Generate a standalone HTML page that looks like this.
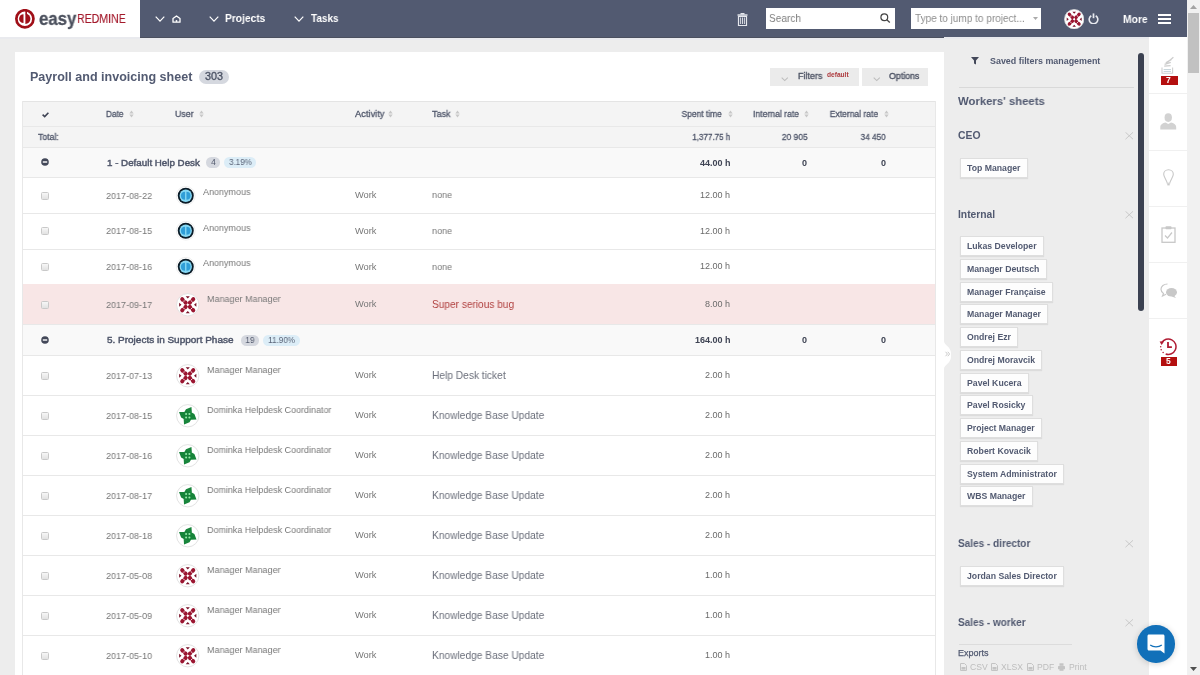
<!DOCTYPE html><html><head><meta charset="utf-8"><style>*{box-sizing:border-box;margin:0;padding:0}
html,body{width:1200px;height:675px;overflow:hidden;background:#ededed;font-family:"Liberation Sans",sans-serif;position:relative}
.a{position:absolute;white-space:nowrap;will-change:transform}
.th{font-size:7.85px;font-weight:bold;color:#525a71;line-height:10px}
</style></head><body><div class="a" style="left:0px;top:0px;width:140px;height:37px;background:#fff;"></div>
<div class="a" style="left:140px;top:0px;width:1047px;height:38px;background:#525a71;"></div>
<div class="a" style="left:140px;top:37px;width:1047px;height:1px;background:#4a4f5f;"></div>
<div class="a" style="left:0px;top:37px;width:140px;height:2px;background:#e9eaee;"></div>
<div class="a" style="left:140px;top:38px;width:1047px;height:2px;background:#e9eaee;"></div>
<svg class="a" style="left:15.3px;top:8.9px" width="20" height="20" viewBox="0 0 20 20"><circle cx="9.9" cy="9.8" r="8.55" fill="none" stroke="#a00f18" stroke-width="2.7"/>
<path d="M8.5 5.3 A4.4 4.4 0 0 0 8.5 14.1 Z" fill="#a00f18"/>
<path d="M10.35 4.7 A5.1 5.1 0 0 1 10.35 14.9 Z" fill="#a00f18"/><rect x="10.35" y="1.8" width="1.7" height="3.5" fill="#a00f18"/></svg>
<div class="a" style="left:39.425px;top:8.2px;font-size:17.5px;line-height:22px;color:#4b505d;font-weight:bold;transform:scaleX(0.9582);transform-origin:0 50%;-webkit-text-stroke:0.3px #4b505d">easy</div>
<div class="a" style="left:77.14px;top:11.2px;font-size:13.2px;line-height:16px;color:#a3192b;font-weight:normal;transform:scaleX(0.8031);transform-origin:0 50%;-webkit-text-stroke:0.15px #a3192b">REDMINE</div>
<svg class="a" style="left:154.5px;top:15.9px" width="10" height="6" viewBox="0 0 10 6"><path d="M0.7 0.7 L5.0 5.1 L9.3 0.7" fill="none" stroke="#fff" stroke-width="1.2"/></svg>
<svg class="a" style="left:171.5px;top:15px" width="9" height="8" viewBox="0 0 9 8"><path d="M1 7.2 V3.6 L4.5 0.9 L8 3.6 V7.2 Z" fill="none" stroke="#fff" stroke-width="1.3" stroke-linejoin="round"/><circle cx="4.5" cy="6" r="0.9" fill="#fff"/></svg>
<svg class="a" style="left:209px;top:15.9px" width="10" height="6" viewBox="0 0 10 6"><path d="M0.7 0.7 L5.0 5.1 L9.3 0.7" fill="none" stroke="#fff" stroke-width="1.2"/></svg>
<div class="a" style="left:225.25px;top:11.3px;font-size:11px;line-height:14px;color:#fff;font-weight:bold;transform:scaleX(0.9289);transform-origin:0 50%;">Projects</div>
<svg class="a" style="left:293.7px;top:15.9px" width="10" height="6" viewBox="0 0 10 6"><path d="M0.7 0.7 L5.0 5.1 L9.3 0.7" fill="none" stroke="#fff" stroke-width="1.2"/></svg>
<div class="a" style="left:310.65px;top:11.3px;font-size:11px;line-height:14px;color:#fff;font-weight:bold;transform:scaleX(0.9061);transform-origin:0 50%;">Tasks</div>
<svg class="a" style="left:737px;top:12.5px" width="11" height="13" viewBox="0 0 11 13"><rect x="0.5" y="1.3" width="10" height="1.4" fill="#e6e8ee"/><rect x="3.5" y="0" width="4" height="1.5" fill="#e6e8ee"/><path d="M1.5 3.3 H9.5 V12.5 H1.5 Z" fill="none" stroke="#e6e8ee" stroke-width="1.2"/><path d="M3.6 4.5 V11 M5.5 4.5 V11 M7.4 4.5 V11" stroke="#e6e8ee" stroke-width="0.9"/></svg>
<div class="a" style="left:766px;top:8px;width:129px;height:21px;background:#fff;"></div>
<div class="a" style="left:769.02px;top:11.100000000000001px;font-size:11.6px;line-height:14px;color:#808080;font-weight:normal;transform:scaleX(0.8705);transform-origin:0 50%;">Search</div>
<svg class="a" style="left:880px;top:13.3px" width="11" height="10" viewBox="0 0 11 10"><circle cx="4.3" cy="4.2" r="3.4" fill="none" stroke="#444" stroke-width="1.2"/><path d="M6.8 6.8 L9.8 9.5" stroke="#444" stroke-width="1.3"/></svg>
<div class="a" style="left:911px;top:8px;width:130px;height:21px;background:#fff;"></div>
<div class="a" style="left:915.02px;top:11.100000000000001px;font-size:11.6px;line-height:14px;color:#8e8e8e;font-weight:normal;transform:scaleX(0.8645);transform-origin:0 50%;">Type to jump to project...</div>
<svg class="a" style="left:1033px;top:17px" width="5" height="3" viewBox="0 0 5 3"><path d="M0 0 H5 L2.5 3 Z" fill="#aaa"/></svg>
<svg class="a" style="left:1063.6px;top:8.7px" width="20.4" height="20.4" viewBox="0 0 24 24">
<circle cx="12" cy="12" r="11.4" fill="#fff" stroke="#dedede" stroke-width="0.9"/><ellipse cx="6.6" cy="6.6" rx="2.5" ry="2.05" transform="rotate(45 6.6 6.6)" fill="#9b1631"/><ellipse cx="9.7" cy="9.7" rx="2.5" ry="2.05" transform="rotate(45 9.7 9.7)" fill="#9b1631"/><ellipse cx="17.4" cy="6.6" rx="2.5" ry="2.05" transform="rotate(-45 17.4 6.6)" fill="#9b1631"/><ellipse cx="14.3" cy="9.7" rx="2.5" ry="2.05" transform="rotate(-45 14.3 9.7)" fill="#9b1631"/><ellipse cx="6.6" cy="17.4" rx="2.5" ry="2.05" transform="rotate(-45 6.6 17.4)" fill="#9b1631"/><ellipse cx="9.7" cy="14.3" rx="2.5" ry="2.05" transform="rotate(-45 9.7 14.3)" fill="#9b1631"/><ellipse cx="17.4" cy="17.4" rx="2.5" ry="2.05" transform="rotate(45 17.4 17.4)" fill="#9b1631"/><ellipse cx="14.3" cy="14.3" rx="2.5" ry="2.05" transform="rotate(45 14.3 14.3)" fill="#9b1631"/>
<path d="M9.9 3.2 H14.1 L12 5.6 Z M9.9 20.8 H14.1 L12 18.4 Z M3.2 9.9 V14.1 L5.6 12 Z M20.8 9.9 V14.1 L18.4 12 Z" fill="#7a1229"/>
<circle cx="12" cy="12" r="1.1" fill="#fff"/><circle cx="8.15" cy="8.15" r="0.6" fill="#fff"/><circle cx="15.85" cy="8.15" r="0.6" fill="#fff"/><circle cx="8.15" cy="15.85" r="0.6" fill="#fff"/><circle cx="15.85" cy="15.85" r="0.6" fill="#fff"/>
</svg>
<svg class="a" style="left:1088.2px;top:13.4px" width="11" height="11" viewBox="0 0 11 11"><path d="M3.3 2.7 A4.3 4.3 0 1 0 7.7 2.7" fill="none" stroke="#e8eaf0" stroke-width="1.6"/><path d="M5.5 0.4 V5.2" stroke="#e8eaf0" stroke-width="1.7"/></svg>
<div class="a" style="left:1123.3500000000001px;top:11.8px;font-size:11px;line-height:14px;color:#fff;font-weight:bold;transform:scaleX(0.9330);transform-origin:0 50%;">More</div>
<svg class="a" style="left:1158.3px;top:13.6px" width="13" height="10" viewBox="0 0 13 10"><rect x="0" y="0" width="13" height="2" fill="#fff"/><rect x="0" y="4" width="13" height="2" fill="#fff"/><rect x="0" y="8" width="13" height="2" fill="#fff"/></svg>
<div class="a" style="left:1187px;top:0px;width:13px;height:675px;background:#f1f1f1;"></div>
<div class="a" style="left:1188px;top:13px;width:11px;height:60px;background:#c1c1c1;"></div>
<svg class="a" style="left:1190px;top:5px" width="7" height="4" viewBox="0 0 7 4"><path d="M0 4 H7 L3.5 0 Z" fill="#a3a3a3"/></svg>
<svg class="a" style="left:1190px;top:667px" width="7" height="4" viewBox="0 0 7 4"><path d="M0 0 H7 L3.5 4 Z" fill="#505050"/></svg>
<div class="a" style="left:15px;top:52px;width:929px;height:640px;background:#fff;"></div>
<div class="a" style="left:29.975px;top:68.9px;font-size:12.5px;line-height:16px;color:#525a71;font-weight:bold;transform:scaleX(1.0029);transform-origin:0 50%;">Payroll and invoicing sheet</div>
<div class="a" style="left:199.3px;top:70px;width:30.3px;height:14.4px;background:#d5d8df;border-radius:7.2px"></div>
<div class="a" style="left:205.44128124999997px;top:69.4px;font-size:10.8px;line-height:14px;color:#4a5163;font-weight:normal;-webkit-text-stroke:0.3px #4a5163">303</div>
<div class="a" style="left:770px;top:68px;width:89px;height:17.5px;background:#ebebeb;"></div>
<div class="a" style="left:862px;top:68px;width:65.5px;height:17.5px;background:#ebebeb;"></div>
<svg class="a" style="left:781px;top:77px" width="7.5" height="4.5" viewBox="0 0 7.5 4.5"><path d="M0.7 0.7 L3.75 3.6 L6.8 0.7" fill="none" stroke="#bdbdbd" stroke-width="1.1"/></svg>
<svg class="a" style="left:872.5px;top:77px" width="7.5" height="4.5" viewBox="0 0 7.5 4.5"><path d="M0.7 0.7 L3.75 3.6 L6.8 0.7" fill="none" stroke="#bdbdbd" stroke-width="1.1"/></svg>
<div class="a" style="left:797.795px;top:70.6px;font-size:9.1px;line-height:11px;color:#4d5364;font-weight:normal;transform:scaleX(0.9827);transform-origin:0 50%;-webkit-text-stroke:0.35px #4d5364">Filters</div>
<div class="a" style="left:826.87px;top:70.7px;font-size:6.6px;line-height:8px;color:#ad3a3e;font-weight:bold;transform:scaleX(0.9843);transform-origin:0 50%;">default</div>
<div class="a" style="left:889.245px;top:70.6px;font-size:9.1px;line-height:11px;color:#4d5364;font-weight:normal;transform:scaleX(0.9691);transform-origin:0 50%;-webkit-text-stroke:0.35px #4d5364">Options</div>
<div class="a" style="left:22px;top:101px;width:914px;height:25px;background:#f4f4f4;"></div>
<div class="a" style="left:22px;top:126px;width:914px;height:21px;background:#f4f4f4;"></div>
<div class="a" style="left:22px;top:147px;width:914px;height:30px;background:#f9f9f9;"></div>
<div class="a" style="left:22px;top:101px;width:914px;height:1px;background:#e4e4e4;"></div>
<div class="a" style="left:22px;top:126px;width:914px;height:1px;background:#e8e8e8;"></div>
<div class="a" style="left:22px;top:147px;width:914px;height:1px;background:#e8e8e8;"></div>
<div class="a" style="left:22px;top:177px;width:914px;height:1px;background:#e8e8e8;"></div>
<svg class="a" style="left:41.5px;top:111.5px" width="7" height="5.5" viewBox="0 0 7 5.5"><path d="M0.6 2.6 L2.7 4.6 L6.4 0.7" fill="none" stroke="#3f4454" stroke-width="1.6"/></svg>
<div class="a" style="left:106.33px;top:108.0px;font-size:9.4px;line-height:12px;color:#4f566a;font-weight:normal;transform:scaleX(0.8828);transform-origin:0 50%;-webkit-text-stroke:0.3px #4f566a">Date</div>
<svg class="a" style="left:129.3px;top:110px" width="5" height="8" viewBox="0 0 5 8"><path d="M0.3 3.4 L2.5 0.4 L4.7 3.4 Z M0.3 4.6 L2.5 7.6 L4.7 4.6 Z" fill="#c8c8c8"/></svg>
<div class="a" style="left:174.83px;top:108.0px;font-size:9.4px;line-height:12px;color:#4f566a;font-weight:normal;transform:scaleX(0.9336);transform-origin:0 50%;-webkit-text-stroke:0.3px #4f566a">User</div>
<svg class="a" style="left:198.7px;top:110px" width="5" height="8" viewBox="0 0 5 8"><path d="M0.3 3.4 L2.5 0.4 L4.7 3.4 Z M0.3 4.6 L2.5 7.6 L4.7 4.6 Z" fill="#c8c8c8"/></svg>
<div class="a" style="left:354.53px;top:108.0px;font-size:9.4px;line-height:12px;color:#4f566a;font-weight:normal;transform:scaleX(0.9885);transform-origin:0 50%;-webkit-text-stroke:0.3px #4f566a">Activity</div>
<svg class="a" style="left:388px;top:110px" width="5" height="8" viewBox="0 0 5 8"><path d="M0.3 3.4 L2.5 0.4 L4.7 3.4 Z M0.3 4.6 L2.5 7.6 L4.7 4.6 Z" fill="#c8c8c8"/></svg>
<div class="a" style="left:431.53px;top:108.0px;font-size:9.4px;line-height:12px;color:#4f566a;font-weight:normal;transform:scaleX(0.9638);transform-origin:0 50%;-webkit-text-stroke:0.3px #4f566a">Task</div>
<svg class="a" style="left:455px;top:110px" width="5" height="8" viewBox="0 0 5 8"><path d="M0.3 3.4 L2.5 0.4 L4.7 3.4 Z M0.3 4.6 L2.5 7.6 L4.7 4.6 Z" fill="#c8c8c8"/></svg>
<div class="a" style="right:478.03px;top:108.0px;font-size:9.4px;line-height:12px;color:#4f566a;font-weight:normal;transform:scaleX(0.8986);transform-origin:100% 50%;-webkit-text-stroke:0.3px #4f566a">Spent time</div>
<svg class="a" style="left:727.5px;top:110px" width="5" height="8" viewBox="0 0 5 8"><path d="M0.3 3.4 L2.5 0.4 L4.7 3.4 Z M0.3 4.6 L2.5 7.6 L4.7 4.6 Z" fill="#c8c8c8"/></svg>
<div class="a" style="right:401.13px;top:108.0px;font-size:9.4px;line-height:12px;color:#4f566a;font-weight:normal;transform:scaleX(0.9197);transform-origin:100% 50%;-webkit-text-stroke:0.3px #4f566a">Internal rate</div>
<svg class="a" style="left:804.3px;top:110px" width="5" height="8" viewBox="0 0 5 8"><path d="M0.3 3.4 L2.5 0.4 L4.7 3.4 Z M0.3 4.6 L2.5 7.6 L4.7 4.6 Z" fill="#c8c8c8"/></svg>
<div class="a" style="right:321.53px;top:108.0px;font-size:9.4px;line-height:12px;color:#4f566a;font-weight:normal;transform:scaleX(0.9107);transform-origin:100% 50%;-webkit-text-stroke:0.3px #4f566a">External rate</div>
<svg class="a" style="left:884px;top:110px" width="5" height="8" viewBox="0 0 5 8"><path d="M0.3 3.4 L2.5 0.4 L4.7 3.4 Z M0.3 4.6 L2.5 7.6 L4.7 4.6 Z" fill="#c8c8c8"/></svg>
<div class="a" style="left:37.93px;top:130.6px;font-size:9.4px;line-height:12px;color:#4f566a;font-weight:normal;transform:scaleX(0.9226);transform-origin:0 50%;-webkit-text-stroke:0.3px #4f566a">Total:</div>
<div class="a" style="right:469.73px;top:130.6px;font-size:9.4px;line-height:12px;color:#4f566a;font-weight:normal;transform:scaleX(0.8583);transform-origin:100% 50%;-webkit-text-stroke:0.3px #4f566a">1,377.75 h</div>
<div class="a" style="right:392.3299999999999px;top:130.6px;font-size:9.4px;line-height:12px;color:#4f566a;font-weight:normal;transform:scaleX(0.9019);transform-origin:100% 50%;-webkit-text-stroke:0.3px #4f566a">20 905</div>
<div class="a" style="right:313.92999999999995px;top:130.6px;font-size:9.4px;line-height:12px;color:#4f566a;font-weight:normal;transform:scaleX(0.8741);transform-origin:100% 50%;-webkit-text-stroke:0.3px #4f566a">34 450</div>
<div class="a" style="left:22px;top:147px;width:914px;height:30px;background:#f9f9f9;"></div>
<div class="a" style="left:22px;top:147px;width:914px;height:1px;background:#e8e8e8;"></div>
<div class="a" style="left:22px;top:177px;width:914px;height:1px;background:#e8e8e8;"></div>
<svg class="a" style="left:41px;top:158.4px" width="8" height="8" viewBox="0 0 8 8"><circle cx="4" cy="4" r="3.8" fill="#434859"/><rect x="1.8" y="3.3" width="4.4" height="1.4" fill="#fff"/></svg>
<div class="a" style="left:107.11999999999999px;top:156.9px;font-size:9.6px;line-height:12px;color:#4f566a;font-weight:normal;transform:scaleX(1.0188);transform-origin:0 50%;-webkit-text-stroke:0.45px #4f566a">1 - Default Help Desk</div>
<div class="a" style="left:206.2px;top:157.1px;width:14.200000000000017px;height:10.6px;background:#d5d8df;border-radius:5.3px"></div>
<div class="a" style="left:210.85318750000002px;top:157.20000000000002px;font-size:8.8px;line-height:11px;color:#4f566a;font-weight:normal;transform:scaleX(0.9200);transform-origin:50% 50%;">4</div>
<div class="a" style="left:224.2px;top:157.1px;width:32.30000000000001px;height:10.6px;background:#dcedf7;border-radius:5.3px"></div>
<div class="a" style="left:227.87462499999998px;top:157.20000000000002px;font-size:8.8px;line-height:11px;color:#5a6478;font-weight:normal;transform:scaleX(0.9200);transform-origin:50% 50%;">3.19%</div>
<div class="a" style="right:469.70000000000005px;top:157.9px;font-size:9px;line-height:11px;color:#3f4454;font-weight:bold;">44.00 h</div>
<div class="a" style="right:393.4px;top:157.9px;font-size:9px;line-height:11px;color:#3f4454;font-weight:bold;">0</div>
<div class="a" style="right:314.4px;top:157.9px;font-size:9px;line-height:11px;color:#3f4454;font-weight:bold;">0</div>
<div class="a" style="left:22px;top:213px;width:914px;height:1px;background:#e8e8e8;"></div>
<div class="a" style="left:41px;top:191.5px;width:7.5px;height:7.5px;border:1px solid #c9c9c9;border-radius:1.5px;background:linear-gradient(#f7f7f7,#e2e2e2)"></div>
<div class="a" style="left:106.42500000000001px;top:189.65px;font-size:9.5px;line-height:12px;color:#777;font-weight:normal;transform:scaleX(0.9496);transform-origin:0 50%;">2017-08-22</div>
<svg class="a" style="left:175.95px;top:185.5px" width="19.5" height="19.5" viewBox="0 0 19.5 19.5">
<circle cx="9.75" cy="9.75" r="9.4" fill="#fff" stroke="#e4e4e4" stroke-width="0.6"/>
<circle cx="9.75" cy="9.75" r="8" fill="#0b1c28"/>
<circle cx="9.75" cy="9.75" r="6.2" fill="#86d8f4"/>
<path d="M9.05 5.65 A4.1 4.1 0 0 0 9.05 13.85 Z" fill="#2f9ed8"/><path d="M10.45 5.65 A4.1 4.1 0 0 1 10.45 13.85 Z" fill="#2f9ed8"/>
</svg>
<div class="a" style="left:202.835px;top:185.8px;font-size:9.3px;line-height:12px;color:#777;font-weight:normal;transform:scaleX(0.9676);transform-origin:0 50%;">Anonymous</div>
<div class="a" style="left:355.13500000000005px;top:189.25px;font-size:9.3px;line-height:12px;color:#777;font-weight:normal;transform:scaleX(0.9902);transform-origin:0 50%;">Work</div>
<div class="a" style="left:432.435px;top:189.25px;font-size:9.3px;line-height:12px;color:#777;font-weight:normal;transform:scaleX(0.9724);transform-origin:0 50%;">none</div>
<div class="a" style="right:470.1px;top:189.75px;font-size:9px;line-height:11px;color:#6a6a6a;font-weight:normal;">12.00 h</div>
<div class="a" style="left:22px;top:248.5px;width:914px;height:1px;background:#e8e8e8;"></div>
<div class="a" style="left:41px;top:227.25px;width:7.5px;height:7.5px;border:1px solid #c9c9c9;border-radius:1.5px;background:linear-gradient(#f7f7f7,#e2e2e2)"></div>
<div class="a" style="left:106.42500000000001px;top:225.4px;font-size:9.5px;line-height:12px;color:#777;font-weight:normal;transform:scaleX(0.9496);transform-origin:0 50%;">2017-08-15</div>
<svg class="a" style="left:175.95px;top:221.25px" width="19.5" height="19.5" viewBox="0 0 19.5 19.5">
<circle cx="9.75" cy="9.75" r="9.4" fill="#fff" stroke="#e4e4e4" stroke-width="0.6"/>
<circle cx="9.75" cy="9.75" r="8" fill="#0b1c28"/>
<circle cx="9.75" cy="9.75" r="6.2" fill="#86d8f4"/>
<path d="M9.05 5.65 A4.1 4.1 0 0 0 9.05 13.85 Z" fill="#2f9ed8"/><path d="M10.45 5.65 A4.1 4.1 0 0 1 10.45 13.85 Z" fill="#2f9ed8"/>
</svg>
<div class="a" style="left:202.835px;top:221.8px;font-size:9.3px;line-height:12px;color:#777;font-weight:normal;transform:scaleX(0.9676);transform-origin:0 50%;">Anonymous</div>
<div class="a" style="left:355.13500000000005px;top:225.0px;font-size:9.3px;line-height:12px;color:#777;font-weight:normal;transform:scaleX(0.9902);transform-origin:0 50%;">Work</div>
<div class="a" style="left:432.435px;top:225.0px;font-size:9.3px;line-height:12px;color:#777;font-weight:normal;transform:scaleX(0.9724);transform-origin:0 50%;">none</div>
<div class="a" style="right:470.1px;top:225.5px;font-size:9px;line-height:11px;color:#6a6a6a;font-weight:normal;">12.00 h</div>
<div class="a" style="left:22px;top:284px;width:914px;height:1px;background:#e8e8e8;"></div>
<div class="a" style="left:41px;top:262.75px;width:7.5px;height:7.5px;border:1px solid #c9c9c9;border-radius:1.5px;background:linear-gradient(#f7f7f7,#e2e2e2)"></div>
<div class="a" style="left:106.42500000000001px;top:260.9px;font-size:9.5px;line-height:12px;color:#777;font-weight:normal;transform:scaleX(0.9496);transform-origin:0 50%;">2017-08-16</div>
<svg class="a" style="left:175.95px;top:256.75px" width="19.5" height="19.5" viewBox="0 0 19.5 19.5">
<circle cx="9.75" cy="9.75" r="9.4" fill="#fff" stroke="#e4e4e4" stroke-width="0.6"/>
<circle cx="9.75" cy="9.75" r="8" fill="#0b1c28"/>
<circle cx="9.75" cy="9.75" r="6.2" fill="#86d8f4"/>
<path d="M9.05 5.65 A4.1 4.1 0 0 0 9.05 13.85 Z" fill="#2f9ed8"/><path d="M10.45 5.65 A4.1 4.1 0 0 1 10.45 13.85 Z" fill="#2f9ed8"/>
</svg>
<div class="a" style="left:202.835px;top:257.3px;font-size:9.3px;line-height:12px;color:#777;font-weight:normal;transform:scaleX(0.9676);transform-origin:0 50%;">Anonymous</div>
<div class="a" style="left:355.13500000000005px;top:260.5px;font-size:9.3px;line-height:12px;color:#777;font-weight:normal;transform:scaleX(0.9902);transform-origin:0 50%;">Work</div>
<div class="a" style="left:432.435px;top:260.5px;font-size:9.3px;line-height:12px;color:#777;font-weight:normal;transform:scaleX(0.9724);transform-origin:0 50%;">none</div>
<div class="a" style="right:470.1px;top:261.0px;font-size:9px;line-height:11px;color:#6a6a6a;font-weight:normal;">12.00 h</div>
<div class="a" style="left:22px;top:284px;width:914px;height:40px;background:#f8e6e6;"></div>
<div class="a" style="left:22px;top:324px;width:914px;height:1px;background:#e8e8e8;"></div>
<div class="a" style="left:41px;top:300.5px;width:7.5px;height:7.5px;border:1px solid #c9c9c9;border-radius:1.5px;background:linear-gradient(#f7f7f7,#e2e2e2)"></div>
<div class="a" style="left:106.42500000000001px;top:298.65px;font-size:9.5px;line-height:12px;color:#777;font-weight:normal;transform:scaleX(0.9496);transform-origin:0 50%;">2017-09-17</div>
<svg class="a" style="left:175.75px;top:292.5px" width="23.5" height="23.5" viewBox="0 0 24 24">
<circle cx="12" cy="12" r="11.4" fill="#fff" stroke="#dedede" stroke-width="0.9"/><ellipse cx="6.6" cy="6.6" rx="2.5" ry="2.05" transform="rotate(45 6.6 6.6)" fill="#9b1631"/><ellipse cx="9.7" cy="9.7" rx="2.5" ry="2.05" transform="rotate(45 9.7 9.7)" fill="#9b1631"/><ellipse cx="17.4" cy="6.6" rx="2.5" ry="2.05" transform="rotate(-45 17.4 6.6)" fill="#9b1631"/><ellipse cx="14.3" cy="9.7" rx="2.5" ry="2.05" transform="rotate(-45 14.3 9.7)" fill="#9b1631"/><ellipse cx="6.6" cy="17.4" rx="2.5" ry="2.05" transform="rotate(-45 6.6 17.4)" fill="#9b1631"/><ellipse cx="9.7" cy="14.3" rx="2.5" ry="2.05" transform="rotate(-45 9.7 14.3)" fill="#9b1631"/><ellipse cx="17.4" cy="17.4" rx="2.5" ry="2.05" transform="rotate(45 17.4 17.4)" fill="#9b1631"/><ellipse cx="14.3" cy="14.3" rx="2.5" ry="2.05" transform="rotate(45 14.3 14.3)" fill="#9b1631"/>
<path d="M9.9 3.2 H14.1 L12 5.6 Z M9.9 20.8 H14.1 L12 18.4 Z M3.2 9.9 V14.1 L5.6 12 Z M20.8 9.9 V14.1 L18.4 12 Z" fill="#7a1229"/>
<circle cx="12" cy="12" r="1.1" fill="#fff"/><circle cx="8.15" cy="8.15" r="0.6" fill="#fff"/><circle cx="15.85" cy="8.15" r="0.6" fill="#fff"/><circle cx="8.15" cy="15.85" r="0.6" fill="#fff"/><circle cx="15.85" cy="15.85" r="0.6" fill="#fff"/>
</svg>
<div class="a" style="left:207.035px;top:292.5px;font-size:9.3px;line-height:12px;color:#777;font-weight:normal;transform:scaleX(0.9688);transform-origin:0 50%;">Manager Manager</div>
<div class="a" style="left:355.13500000000005px;top:298.25px;font-size:9.3px;line-height:12px;color:#777;font-weight:normal;transform:scaleX(0.9902);transform-origin:0 50%;">Work</div>
<div class="a" style="left:432.07500000000005px;top:297.75px;font-size:10.5px;line-height:13px;color:#b0403f;font-weight:normal;transform:scaleX(0.9630);transform-origin:0 50%;">Super serious bug</div>
<div class="a" style="right:470.1px;top:298.75px;font-size:9px;line-height:11px;color:#6a6a6a;font-weight:normal;">8.00 h</div>
<div class="a" style="left:22px;top:324px;width:914px;height:31px;background:#f9f9f9;"></div>
<div class="a" style="left:22px;top:324px;width:914px;height:1px;background:#e8e8e8;"></div>
<div class="a" style="left:22px;top:355px;width:914px;height:1px;background:#e8e8e8;"></div>
<svg class="a" style="left:41px;top:335.9px" width="8" height="8" viewBox="0 0 8 8"><circle cx="4" cy="4" r="3.8" fill="#434859"/><rect x="1.8" y="3.3" width="4.4" height="1.4" fill="#fff"/></svg>
<div class="a" style="left:107.11999999999999px;top:334.4px;font-size:9.6px;line-height:12px;color:#4f566a;font-weight:normal;transform:scaleX(1.0402);transform-origin:0 50%;-webkit-text-stroke:0.45px #4f566a">5. Projects in Support Phase</div>
<div class="a" style="left:240.75px;top:334.59999999999997px;width:18.25px;height:10.6px;background:#d5d8df;border-radius:5.3px"></div>
<div class="a" style="left:244.981375px;top:334.7px;font-size:8.8px;line-height:11px;color:#4f566a;font-weight:normal;transform:scaleX(0.9200);transform-origin:50% 50%;">19</div>
<div class="a" style="left:263.3px;top:334.59999999999997px;width:37.0px;height:10.6px;background:#dcedf7;border-radius:5.3px"></div>
<div class="a" style="left:267.204375px;top:334.7px;font-size:8.8px;line-height:11px;color:#5a6478;font-weight:normal;transform:scaleX(0.9200);transform-origin:50% 50%;">11.90%</div>
<div class="a" style="right:469.70000000000005px;top:335.4px;font-size:9px;line-height:11px;color:#3f4454;font-weight:bold;">164.00 h</div>
<div class="a" style="right:393.4px;top:335.4px;font-size:9px;line-height:11px;color:#3f4454;font-weight:bold;">0</div>
<div class="a" style="right:314.4px;top:335.4px;font-size:9px;line-height:11px;color:#3f4454;font-weight:bold;">0</div>
<div class="a" style="left:22px;top:395px;width:914px;height:1px;background:#e8e8e8;"></div>
<div class="a" style="left:41px;top:371.5px;width:7.5px;height:7.5px;border:1px solid #c9c9c9;border-radius:1.5px;background:linear-gradient(#f7f7f7,#e2e2e2)"></div>
<div class="a" style="left:106.42500000000001px;top:369.65px;font-size:9.5px;line-height:12px;color:#777;font-weight:normal;transform:scaleX(0.9496);transform-origin:0 50%;">2017-07-13</div>
<svg class="a" style="left:175.75px;top:363.5px" width="23.5" height="23.5" viewBox="0 0 24 24">
<circle cx="12" cy="12" r="11.4" fill="#fff" stroke="#dedede" stroke-width="0.9"/><ellipse cx="6.6" cy="6.6" rx="2.5" ry="2.05" transform="rotate(45 6.6 6.6)" fill="#9b1631"/><ellipse cx="9.7" cy="9.7" rx="2.5" ry="2.05" transform="rotate(45 9.7 9.7)" fill="#9b1631"/><ellipse cx="17.4" cy="6.6" rx="2.5" ry="2.05" transform="rotate(-45 17.4 6.6)" fill="#9b1631"/><ellipse cx="14.3" cy="9.7" rx="2.5" ry="2.05" transform="rotate(-45 14.3 9.7)" fill="#9b1631"/><ellipse cx="6.6" cy="17.4" rx="2.5" ry="2.05" transform="rotate(-45 6.6 17.4)" fill="#9b1631"/><ellipse cx="9.7" cy="14.3" rx="2.5" ry="2.05" transform="rotate(-45 9.7 14.3)" fill="#9b1631"/><ellipse cx="17.4" cy="17.4" rx="2.5" ry="2.05" transform="rotate(45 17.4 17.4)" fill="#9b1631"/><ellipse cx="14.3" cy="14.3" rx="2.5" ry="2.05" transform="rotate(45 14.3 14.3)" fill="#9b1631"/>
<path d="M9.9 3.2 H14.1 L12 5.6 Z M9.9 20.8 H14.1 L12 18.4 Z M3.2 9.9 V14.1 L5.6 12 Z M20.8 9.9 V14.1 L18.4 12 Z" fill="#7a1229"/>
<circle cx="12" cy="12" r="1.1" fill="#fff"/><circle cx="8.15" cy="8.15" r="0.6" fill="#fff"/><circle cx="15.85" cy="8.15" r="0.6" fill="#fff"/><circle cx="8.15" cy="15.85" r="0.6" fill="#fff"/><circle cx="15.85" cy="15.85" r="0.6" fill="#fff"/>
</svg>
<div class="a" style="left:207.035px;top:363.5px;font-size:9.3px;line-height:12px;color:#777;font-weight:normal;transform:scaleX(0.9688);transform-origin:0 50%;">Manager Manager</div>
<div class="a" style="left:355.13500000000005px;top:369.25px;font-size:9.3px;line-height:12px;color:#777;font-weight:normal;transform:scaleX(0.9902);transform-origin:0 50%;">Work</div>
<div class="a" style="left:432.07500000000005px;top:368.75px;font-size:10.5px;line-height:13px;color:#6b6f7b;font-weight:normal;transform:scaleX(0.9711);transform-origin:0 50%;">Help Desk ticket</div>
<div class="a" style="right:470.1px;top:369.75px;font-size:9px;line-height:11px;color:#6a6a6a;font-weight:normal;">2.00 h</div>
<div class="a" style="left:22px;top:435px;width:914px;height:1px;background:#e8e8e8;"></div>
<div class="a" style="left:41px;top:411.5px;width:7.5px;height:7.5px;border:1px solid #c9c9c9;border-radius:1.5px;background:linear-gradient(#f7f7f7,#e2e2e2)"></div>
<div class="a" style="left:106.42500000000001px;top:409.65px;font-size:9.5px;line-height:12px;color:#777;font-weight:normal;transform:scaleX(0.9496);transform-origin:0 50%;">2017-08-15</div>
<svg class="a" style="left:175.75px;top:403.5px" width="23.5" height="23.5" viewBox="0 0 24 24">
<circle cx="12" cy="12" r="11.4" fill="#fff" stroke="#dedede" stroke-width="0.9"/>
<path d="M10.19 5.24 L18.76 10.19 L13.81 18.76 L5.24 13.81 Z M10.19 5.24 L15.79 3.07 L16.19 8.70 Z M18.76 10.19 L20.93 15.79 L15.30 16.19 Z M13.81 18.76 L8.21 20.93 L7.81 15.30 Z M5.24 13.81 L3.07 8.21 L8.70 7.81 Z" fill="#17843a"/>
<circle cx="10.3" cy="10.3" r="1.05" fill="#93eaa9"/><circle cx="13.7" cy="10.3" r="1.05" fill="#93eaa9"/><circle cx="10.3" cy="13.7" r="1.05" fill="#93eaa9"/><circle cx="13.7" cy="13.7" r="1.05" fill="#93eaa9"/>
</svg>
<div class="a" style="left:207.035px;top:403.5px;font-size:9.3px;line-height:12px;color:#777;font-weight:normal;transform:scaleX(0.9628);transform-origin:0 50%;">Dominka Helpdesk Coordinator</div>
<div class="a" style="left:355.13500000000005px;top:409.25px;font-size:9.3px;line-height:12px;color:#777;font-weight:normal;transform:scaleX(0.9902);transform-origin:0 50%;">Work</div>
<div class="a" style="left:432.07500000000005px;top:408.75px;font-size:10.5px;line-height:13px;color:#6b6f7b;font-weight:normal;transform:scaleX(0.9713);transform-origin:0 50%;">Knowledge Base Update</div>
<div class="a" style="right:470.1px;top:409.75px;font-size:9px;line-height:11px;color:#6a6a6a;font-weight:normal;">2.00 h</div>
<div class="a" style="left:22px;top:475px;width:914px;height:1px;background:#e8e8e8;"></div>
<div class="a" style="left:41px;top:451.5px;width:7.5px;height:7.5px;border:1px solid #c9c9c9;border-radius:1.5px;background:linear-gradient(#f7f7f7,#e2e2e2)"></div>
<div class="a" style="left:106.42500000000001px;top:449.65px;font-size:9.5px;line-height:12px;color:#777;font-weight:normal;transform:scaleX(0.9496);transform-origin:0 50%;">2017-08-16</div>
<svg class="a" style="left:175.75px;top:443.5px" width="23.5" height="23.5" viewBox="0 0 24 24">
<circle cx="12" cy="12" r="11.4" fill="#fff" stroke="#dedede" stroke-width="0.9"/>
<path d="M10.19 5.24 L18.76 10.19 L13.81 18.76 L5.24 13.81 Z M10.19 5.24 L15.79 3.07 L16.19 8.70 Z M18.76 10.19 L20.93 15.79 L15.30 16.19 Z M13.81 18.76 L8.21 20.93 L7.81 15.30 Z M5.24 13.81 L3.07 8.21 L8.70 7.81 Z" fill="#17843a"/>
<circle cx="10.3" cy="10.3" r="1.05" fill="#93eaa9"/><circle cx="13.7" cy="10.3" r="1.05" fill="#93eaa9"/><circle cx="10.3" cy="13.7" r="1.05" fill="#93eaa9"/><circle cx="13.7" cy="13.7" r="1.05" fill="#93eaa9"/>
</svg>
<div class="a" style="left:207.035px;top:443.5px;font-size:9.3px;line-height:12px;color:#777;font-weight:normal;transform:scaleX(0.9628);transform-origin:0 50%;">Dominka Helpdesk Coordinator</div>
<div class="a" style="left:355.13500000000005px;top:449.25px;font-size:9.3px;line-height:12px;color:#777;font-weight:normal;transform:scaleX(0.9902);transform-origin:0 50%;">Work</div>
<div class="a" style="left:432.07500000000005px;top:448.75px;font-size:10.5px;line-height:13px;color:#6b6f7b;font-weight:normal;transform:scaleX(0.9713);transform-origin:0 50%;">Knowledge Base Update</div>
<div class="a" style="right:470.1px;top:449.75px;font-size:9px;line-height:11px;color:#6a6a6a;font-weight:normal;">2.00 h</div>
<div class="a" style="left:22px;top:515px;width:914px;height:1px;background:#e8e8e8;"></div>
<div class="a" style="left:41px;top:491.5px;width:7.5px;height:7.5px;border:1px solid #c9c9c9;border-radius:1.5px;background:linear-gradient(#f7f7f7,#e2e2e2)"></div>
<div class="a" style="left:106.42500000000001px;top:489.65px;font-size:9.5px;line-height:12px;color:#777;font-weight:normal;transform:scaleX(0.9496);transform-origin:0 50%;">2017-08-17</div>
<svg class="a" style="left:175.75px;top:483.5px" width="23.5" height="23.5" viewBox="0 0 24 24">
<circle cx="12" cy="12" r="11.4" fill="#fff" stroke="#dedede" stroke-width="0.9"/>
<path d="M10.19 5.24 L18.76 10.19 L13.81 18.76 L5.24 13.81 Z M10.19 5.24 L15.79 3.07 L16.19 8.70 Z M18.76 10.19 L20.93 15.79 L15.30 16.19 Z M13.81 18.76 L8.21 20.93 L7.81 15.30 Z M5.24 13.81 L3.07 8.21 L8.70 7.81 Z" fill="#17843a"/>
<circle cx="10.3" cy="10.3" r="1.05" fill="#93eaa9"/><circle cx="13.7" cy="10.3" r="1.05" fill="#93eaa9"/><circle cx="10.3" cy="13.7" r="1.05" fill="#93eaa9"/><circle cx="13.7" cy="13.7" r="1.05" fill="#93eaa9"/>
</svg>
<div class="a" style="left:207.035px;top:483.5px;font-size:9.3px;line-height:12px;color:#777;font-weight:normal;transform:scaleX(0.9628);transform-origin:0 50%;">Dominka Helpdesk Coordinator</div>
<div class="a" style="left:355.13500000000005px;top:489.25px;font-size:9.3px;line-height:12px;color:#777;font-weight:normal;transform:scaleX(0.9902);transform-origin:0 50%;">Work</div>
<div class="a" style="left:432.07500000000005px;top:488.75px;font-size:10.5px;line-height:13px;color:#6b6f7b;font-weight:normal;transform:scaleX(0.9713);transform-origin:0 50%;">Knowledge Base Update</div>
<div class="a" style="right:470.1px;top:489.75px;font-size:9px;line-height:11px;color:#6a6a6a;font-weight:normal;">2.00 h</div>
<div class="a" style="left:22px;top:555px;width:914px;height:1px;background:#e8e8e8;"></div>
<div class="a" style="left:41px;top:531.5px;width:7.5px;height:7.5px;border:1px solid #c9c9c9;border-radius:1.5px;background:linear-gradient(#f7f7f7,#e2e2e2)"></div>
<div class="a" style="left:106.42500000000001px;top:529.65px;font-size:9.5px;line-height:12px;color:#777;font-weight:normal;transform:scaleX(0.9496);transform-origin:0 50%;">2017-08-18</div>
<svg class="a" style="left:175.75px;top:523.5px" width="23.5" height="23.5" viewBox="0 0 24 24">
<circle cx="12" cy="12" r="11.4" fill="#fff" stroke="#dedede" stroke-width="0.9"/>
<path d="M10.19 5.24 L18.76 10.19 L13.81 18.76 L5.24 13.81 Z M10.19 5.24 L15.79 3.07 L16.19 8.70 Z M18.76 10.19 L20.93 15.79 L15.30 16.19 Z M13.81 18.76 L8.21 20.93 L7.81 15.30 Z M5.24 13.81 L3.07 8.21 L8.70 7.81 Z" fill="#17843a"/>
<circle cx="10.3" cy="10.3" r="1.05" fill="#93eaa9"/><circle cx="13.7" cy="10.3" r="1.05" fill="#93eaa9"/><circle cx="10.3" cy="13.7" r="1.05" fill="#93eaa9"/><circle cx="13.7" cy="13.7" r="1.05" fill="#93eaa9"/>
</svg>
<div class="a" style="left:207.035px;top:523.5px;font-size:9.3px;line-height:12px;color:#777;font-weight:normal;transform:scaleX(0.9628);transform-origin:0 50%;">Dominka Helpdesk Coordinator</div>
<div class="a" style="left:355.13500000000005px;top:529.25px;font-size:9.3px;line-height:12px;color:#777;font-weight:normal;transform:scaleX(0.9902);transform-origin:0 50%;">Work</div>
<div class="a" style="left:432.07500000000005px;top:528.75px;font-size:10.5px;line-height:13px;color:#6b6f7b;font-weight:normal;transform:scaleX(0.9713);transform-origin:0 50%;">Knowledge Base Update</div>
<div class="a" style="right:470.1px;top:529.75px;font-size:9px;line-height:11px;color:#6a6a6a;font-weight:normal;">2.00 h</div>
<div class="a" style="left:22px;top:595px;width:914px;height:1px;background:#e8e8e8;"></div>
<div class="a" style="left:41px;top:571.5px;width:7.5px;height:7.5px;border:1px solid #c9c9c9;border-radius:1.5px;background:linear-gradient(#f7f7f7,#e2e2e2)"></div>
<div class="a" style="left:106.42500000000001px;top:569.65px;font-size:9.5px;line-height:12px;color:#777;font-weight:normal;transform:scaleX(0.9496);transform-origin:0 50%;">2017-05-08</div>
<svg class="a" style="left:175.75px;top:563.5px" width="23.5" height="23.5" viewBox="0 0 24 24">
<circle cx="12" cy="12" r="11.4" fill="#fff" stroke="#dedede" stroke-width="0.9"/><ellipse cx="6.6" cy="6.6" rx="2.5" ry="2.05" transform="rotate(45 6.6 6.6)" fill="#9b1631"/><ellipse cx="9.7" cy="9.7" rx="2.5" ry="2.05" transform="rotate(45 9.7 9.7)" fill="#9b1631"/><ellipse cx="17.4" cy="6.6" rx="2.5" ry="2.05" transform="rotate(-45 17.4 6.6)" fill="#9b1631"/><ellipse cx="14.3" cy="9.7" rx="2.5" ry="2.05" transform="rotate(-45 14.3 9.7)" fill="#9b1631"/><ellipse cx="6.6" cy="17.4" rx="2.5" ry="2.05" transform="rotate(-45 6.6 17.4)" fill="#9b1631"/><ellipse cx="9.7" cy="14.3" rx="2.5" ry="2.05" transform="rotate(-45 9.7 14.3)" fill="#9b1631"/><ellipse cx="17.4" cy="17.4" rx="2.5" ry="2.05" transform="rotate(45 17.4 17.4)" fill="#9b1631"/><ellipse cx="14.3" cy="14.3" rx="2.5" ry="2.05" transform="rotate(45 14.3 14.3)" fill="#9b1631"/>
<path d="M9.9 3.2 H14.1 L12 5.6 Z M9.9 20.8 H14.1 L12 18.4 Z M3.2 9.9 V14.1 L5.6 12 Z M20.8 9.9 V14.1 L18.4 12 Z" fill="#7a1229"/>
<circle cx="12" cy="12" r="1.1" fill="#fff"/><circle cx="8.15" cy="8.15" r="0.6" fill="#fff"/><circle cx="15.85" cy="8.15" r="0.6" fill="#fff"/><circle cx="8.15" cy="15.85" r="0.6" fill="#fff"/><circle cx="15.85" cy="15.85" r="0.6" fill="#fff"/>
</svg>
<div class="a" style="left:207.035px;top:563.5px;font-size:9.3px;line-height:12px;color:#777;font-weight:normal;transform:scaleX(0.9688);transform-origin:0 50%;">Manager Manager</div>
<div class="a" style="left:355.13500000000005px;top:569.25px;font-size:9.3px;line-height:12px;color:#777;font-weight:normal;transform:scaleX(0.9902);transform-origin:0 50%;">Work</div>
<div class="a" style="left:432.07500000000005px;top:568.75px;font-size:10.5px;line-height:13px;color:#6b6f7b;font-weight:normal;transform:scaleX(0.9713);transform-origin:0 50%;">Knowledge Base Update</div>
<div class="a" style="right:470.1px;top:569.75px;font-size:9px;line-height:11px;color:#6a6a6a;font-weight:normal;">1.00 h</div>
<div class="a" style="left:22px;top:635px;width:914px;height:1px;background:#e8e8e8;"></div>
<div class="a" style="left:41px;top:611.5px;width:7.5px;height:7.5px;border:1px solid #c9c9c9;border-radius:1.5px;background:linear-gradient(#f7f7f7,#e2e2e2)"></div>
<div class="a" style="left:106.42500000000001px;top:609.65px;font-size:9.5px;line-height:12px;color:#777;font-weight:normal;transform:scaleX(0.9496);transform-origin:0 50%;">2017-05-09</div>
<svg class="a" style="left:175.75px;top:603.5px" width="23.5" height="23.5" viewBox="0 0 24 24">
<circle cx="12" cy="12" r="11.4" fill="#fff" stroke="#dedede" stroke-width="0.9"/><ellipse cx="6.6" cy="6.6" rx="2.5" ry="2.05" transform="rotate(45 6.6 6.6)" fill="#9b1631"/><ellipse cx="9.7" cy="9.7" rx="2.5" ry="2.05" transform="rotate(45 9.7 9.7)" fill="#9b1631"/><ellipse cx="17.4" cy="6.6" rx="2.5" ry="2.05" transform="rotate(-45 17.4 6.6)" fill="#9b1631"/><ellipse cx="14.3" cy="9.7" rx="2.5" ry="2.05" transform="rotate(-45 14.3 9.7)" fill="#9b1631"/><ellipse cx="6.6" cy="17.4" rx="2.5" ry="2.05" transform="rotate(-45 6.6 17.4)" fill="#9b1631"/><ellipse cx="9.7" cy="14.3" rx="2.5" ry="2.05" transform="rotate(-45 9.7 14.3)" fill="#9b1631"/><ellipse cx="17.4" cy="17.4" rx="2.5" ry="2.05" transform="rotate(45 17.4 17.4)" fill="#9b1631"/><ellipse cx="14.3" cy="14.3" rx="2.5" ry="2.05" transform="rotate(45 14.3 14.3)" fill="#9b1631"/>
<path d="M9.9 3.2 H14.1 L12 5.6 Z M9.9 20.8 H14.1 L12 18.4 Z M3.2 9.9 V14.1 L5.6 12 Z M20.8 9.9 V14.1 L18.4 12 Z" fill="#7a1229"/>
<circle cx="12" cy="12" r="1.1" fill="#fff"/><circle cx="8.15" cy="8.15" r="0.6" fill="#fff"/><circle cx="15.85" cy="8.15" r="0.6" fill="#fff"/><circle cx="8.15" cy="15.85" r="0.6" fill="#fff"/><circle cx="15.85" cy="15.85" r="0.6" fill="#fff"/>
</svg>
<div class="a" style="left:207.035px;top:603.5px;font-size:9.3px;line-height:12px;color:#777;font-weight:normal;transform:scaleX(0.9688);transform-origin:0 50%;">Manager Manager</div>
<div class="a" style="left:355.13500000000005px;top:609.25px;font-size:9.3px;line-height:12px;color:#777;font-weight:normal;transform:scaleX(0.9902);transform-origin:0 50%;">Work</div>
<div class="a" style="left:432.07500000000005px;top:608.75px;font-size:10.5px;line-height:13px;color:#6b6f7b;font-weight:normal;transform:scaleX(0.9713);transform-origin:0 50%;">Knowledge Base Update</div>
<div class="a" style="right:470.1px;top:609.75px;font-size:9px;line-height:11px;color:#6a6a6a;font-weight:normal;">1.00 h</div>
<div class="a" style="left:22px;top:675px;width:914px;height:1px;background:#e8e8e8;"></div>
<div class="a" style="left:41px;top:651.5px;width:7.5px;height:7.5px;border:1px solid #c9c9c9;border-radius:1.5px;background:linear-gradient(#f7f7f7,#e2e2e2)"></div>
<div class="a" style="left:106.42500000000001px;top:649.65px;font-size:9.5px;line-height:12px;color:#777;font-weight:normal;transform:scaleX(0.9496);transform-origin:0 50%;">2017-05-10</div>
<svg class="a" style="left:175.75px;top:643.5px" width="23.5" height="23.5" viewBox="0 0 24 24">
<circle cx="12" cy="12" r="11.4" fill="#fff" stroke="#dedede" stroke-width="0.9"/><ellipse cx="6.6" cy="6.6" rx="2.5" ry="2.05" transform="rotate(45 6.6 6.6)" fill="#9b1631"/><ellipse cx="9.7" cy="9.7" rx="2.5" ry="2.05" transform="rotate(45 9.7 9.7)" fill="#9b1631"/><ellipse cx="17.4" cy="6.6" rx="2.5" ry="2.05" transform="rotate(-45 17.4 6.6)" fill="#9b1631"/><ellipse cx="14.3" cy="9.7" rx="2.5" ry="2.05" transform="rotate(-45 14.3 9.7)" fill="#9b1631"/><ellipse cx="6.6" cy="17.4" rx="2.5" ry="2.05" transform="rotate(-45 6.6 17.4)" fill="#9b1631"/><ellipse cx="9.7" cy="14.3" rx="2.5" ry="2.05" transform="rotate(-45 9.7 14.3)" fill="#9b1631"/><ellipse cx="17.4" cy="17.4" rx="2.5" ry="2.05" transform="rotate(45 17.4 17.4)" fill="#9b1631"/><ellipse cx="14.3" cy="14.3" rx="2.5" ry="2.05" transform="rotate(45 14.3 14.3)" fill="#9b1631"/>
<path d="M9.9 3.2 H14.1 L12 5.6 Z M9.9 20.8 H14.1 L12 18.4 Z M3.2 9.9 V14.1 L5.6 12 Z M20.8 9.9 V14.1 L18.4 12 Z" fill="#7a1229"/>
<circle cx="12" cy="12" r="1.1" fill="#fff"/><circle cx="8.15" cy="8.15" r="0.6" fill="#fff"/><circle cx="15.85" cy="8.15" r="0.6" fill="#fff"/><circle cx="8.15" cy="15.85" r="0.6" fill="#fff"/><circle cx="15.85" cy="15.85" r="0.6" fill="#fff"/>
</svg>
<div class="a" style="left:207.035px;top:643.5px;font-size:9.3px;line-height:12px;color:#777;font-weight:normal;transform:scaleX(0.9688);transform-origin:0 50%;">Manager Manager</div>
<div class="a" style="left:355.13500000000005px;top:649.25px;font-size:9.3px;line-height:12px;color:#777;font-weight:normal;transform:scaleX(0.9902);transform-origin:0 50%;">Work</div>
<div class="a" style="left:432.07500000000005px;top:648.75px;font-size:10.5px;line-height:13px;color:#6b6f7b;font-weight:normal;transform:scaleX(0.9713);transform-origin:0 50%;">Knowledge Base Update</div>
<div class="a" style="right:470.1px;top:649.75px;font-size:9px;line-height:11px;color:#6a6a6a;font-weight:normal;">1.00 h</div>
<div class="a" style="left:22px;top:101px;width:1px;height:600px;background:#e8e8e8;"></div>
<div class="a" style="left:935px;top:101px;width:1px;height:600px;background:#e8e8e8;"></div>
<div class="a" style="left:944px;top:37px;width:205px;height:638px;background:#ededed;"></div>
<div class="a" style="left:944px;top:37px;width:205px;height:2px;background:#e8e9ed;"></div>
<svg class="a" style="left:970.5px;top:57.3px" width="8" height="8" viewBox="0 0 8 8"><path d="M0 0 H8 L5 3.6 V7.6 L3 6.6 V3.6 Z" fill="#434859"/></svg>
<div class="a" style="left:989.865px;top:55.8px;font-size:8.7px;line-height:11px;color:#525a71;font-weight:bold;transform:scaleX(1.0244);transform-origin:0 50%;">Saved filters management</div>
<div class="a" style="left:958.7px;top:87px;width:174.6px;height:1px;background:#d9d9d9;"></div>
<div class="a" style="left:958.13px;top:94.0px;font-size:11.4px;line-height:14px;color:#525a71;font-weight:bold;transform:scaleX(0.9939);transform-origin:0 50%;">Workers' sheets</div>
<div class="a" style="left:958.485px;top:128.9px;font-size:10.3px;line-height:13px;color:#525a71;font-weight:bold;transform:scaleX(1.0097);transform-origin:0 50%;">CEO</div>
<svg class="a" style="left:1124.5px;top:131.8px" width="8.5" height="7.5" viewBox="0 0 8.5 7.5"><path d="M0.5 0.3 L8 7.2 M8 0.3 L0.5 7.2" stroke="#c9c9c9" stroke-width="1"/></svg>
<div class="a" style="left:959.5px;top:157.5px;height:20px;background:#fdfdfd;border:1px solid #dedede;box-shadow:0 1px 1px rgba(0,0,0,0.07);font-size:8.7px;font-weight:bold;color:#525a71;line-height:18px;padding:0 6.2px 0 6px">Top Manager</div>
<div class="a" style="left:958.485px;top:207.8px;font-size:10.3px;line-height:13px;color:#525a71;font-weight:bold;transform:scaleX(0.9956);transform-origin:0 50%;">Internal</div>
<svg class="a" style="left:1124.5px;top:210.70000000000002px" width="8.5" height="7.5" viewBox="0 0 8.5 7.5"><path d="M0.5 0.3 L8 7.2 M8 0.3 L0.5 7.2" stroke="#c9c9c9" stroke-width="1"/></svg>
<div class="a" style="left:959.5px;top:236.0px;height:20px;background:#fdfdfd;border:1px solid #dedede;box-shadow:0 1px 1px rgba(0,0,0,0.07);font-size:8.7px;font-weight:bold;color:#525a71;line-height:18px;padding:0 6.2px 0 6px">Lukas Developer</div>
<div class="a" style="left:959.5px;top:258.75px;height:20px;background:#fdfdfd;border:1px solid #dedede;box-shadow:0 1px 1px rgba(0,0,0,0.07);font-size:8.7px;font-weight:bold;color:#525a71;line-height:18px;padding:0 6.2px 0 6px">Manager Deutsch</div>
<div class="a" style="left:959.5px;top:281.5px;height:20px;background:#fdfdfd;border:1px solid #dedede;box-shadow:0 1px 1px rgba(0,0,0,0.07);font-size:8.7px;font-weight:bold;color:#525a71;line-height:18px;padding:0 6.2px 0 6px">Manager Française</div>
<div class="a" style="left:959.5px;top:304.25px;height:20px;background:#fdfdfd;border:1px solid #dedede;box-shadow:0 1px 1px rgba(0,0,0,0.07);font-size:8.7px;font-weight:bold;color:#525a71;line-height:18px;padding:0 6.2px 0 6px">Manager Manager</div>
<div class="a" style="left:959.5px;top:327.0px;height:20px;background:#fdfdfd;border:1px solid #dedede;box-shadow:0 1px 1px rgba(0,0,0,0.07);font-size:8.7px;font-weight:bold;color:#525a71;line-height:18px;padding:0 6.2px 0 6px">Ondrej Ezr</div>
<div class="a" style="left:959.5px;top:349.75px;height:20px;background:#fdfdfd;border:1px solid #dedede;box-shadow:0 1px 1px rgba(0,0,0,0.07);font-size:8.7px;font-weight:bold;color:#525a71;line-height:18px;padding:0 6.2px 0 6px">Ondrej Moravcik</div>
<div class="a" style="left:959.5px;top:372.5px;height:20px;background:#fdfdfd;border:1px solid #dedede;box-shadow:0 1px 1px rgba(0,0,0,0.07);font-size:8.7px;font-weight:bold;color:#525a71;line-height:18px;padding:0 6.2px 0 6px">Pavel Kucera</div>
<div class="a" style="left:959.5px;top:395.25px;height:20px;background:#fdfdfd;border:1px solid #dedede;box-shadow:0 1px 1px rgba(0,0,0,0.07);font-size:8.7px;font-weight:bold;color:#525a71;line-height:18px;padding:0 6.2px 0 6px">Pavel Rosicky</div>
<div class="a" style="left:959.5px;top:418.0px;height:20px;background:#fdfdfd;border:1px solid #dedede;box-shadow:0 1px 1px rgba(0,0,0,0.07);font-size:8.7px;font-weight:bold;color:#525a71;line-height:18px;padding:0 6.2px 0 6px">Project Manager</div>
<div class="a" style="left:959.5px;top:440.75px;height:20px;background:#fdfdfd;border:1px solid #dedede;box-shadow:0 1px 1px rgba(0,0,0,0.07);font-size:8.7px;font-weight:bold;color:#525a71;line-height:18px;padding:0 6.2px 0 6px">Robert Kovacik</div>
<div class="a" style="left:959.5px;top:463.5px;height:20px;background:#fdfdfd;border:1px solid #dedede;box-shadow:0 1px 1px rgba(0,0,0,0.07);font-size:8.7px;font-weight:bold;color:#525a71;line-height:18px;padding:0 6.2px 0 6px">System Administrator</div>
<div class="a" style="left:959.5px;top:486.25px;height:20px;background:#fdfdfd;border:1px solid #dedede;box-shadow:0 1px 1px rgba(0,0,0,0.07);font-size:8.7px;font-weight:bold;color:#525a71;line-height:18px;padding:0 6.2px 0 6px">WBS Manager</div>
<div class="a" style="left:958.485px;top:537.1px;font-size:10.3px;line-height:13px;color:#525a71;font-weight:bold;transform:scaleX(0.9721);transform-origin:0 50%;">Sales - director</div>
<svg class="a" style="left:1124.5px;top:540.0px" width="8.5" height="7.5" viewBox="0 0 8.5 7.5"><path d="M0.5 0.3 L8 7.2 M8 0.3 L0.5 7.2" stroke="#c9c9c9" stroke-width="1"/></svg>
<div class="a" style="left:959.5px;top:565.5px;height:20px;background:#fdfdfd;border:1px solid #dedede;box-shadow:0 1px 1px rgba(0,0,0,0.07);font-size:8.7px;font-weight:bold;color:#525a71;line-height:18px;padding:0 6.2px 0 6px">Jordan Sales Director</div>
<div class="a" style="left:958.485px;top:615.8px;font-size:10.3px;line-height:13px;color:#525a71;font-weight:bold;transform:scaleX(0.9698);transform-origin:0 50%;">Sales - worker</div>
<svg class="a" style="left:1124.5px;top:618.6999999999999px" width="8.5" height="7.5" viewBox="0 0 8.5 7.5"><path d="M0.5 0.3 L8 7.2 M8 0.3 L0.5 7.2" stroke="#c9c9c9" stroke-width="1"/></svg>
<div class="a" style="left:959px;top:644px;width:113px;height:1px;background:#dcdcdc;"></div>
<div class="a" style="left:958.3499999999999px;top:648.4px;font-size:9px;line-height:11px;color:#525a71;font-weight:normal;-webkit-text-stroke:0.25px #525a71">Exports</div>
<svg class="a" style="left:959.8px;top:663px" width="7" height="8" viewBox="0 0 7 8"><path d="M0.5 0.5 H4.5 L6.5 2.5 V7.5 H0.5 Z" fill="none" stroke="#c4c4c4" stroke-width="1"/><rect x="1.5" y="4" width="4" height="2.6" fill="#c4c4c4"/></svg>
<div class="a" style="left:970px;top:661.5px;font-size:8.6px;line-height:11px;color:#bdbdbd;font-weight:normal;">CSV</div>
<svg class="a" style="left:991.3px;top:663px" width="7" height="8" viewBox="0 0 7 8"><path d="M0.5 0.5 H4.5 L6.5 2.5 V7.5 H0.5 Z" fill="none" stroke="#c4c4c4" stroke-width="1"/><rect x="1.5" y="4" width="4" height="2.6" fill="#c4c4c4"/></svg>
<div class="a" style="left:1001px;top:661.5px;font-size:8.6px;line-height:11px;color:#bdbdbd;font-weight:normal;">XLSX</div>
<svg class="a" style="left:1027px;top:663px" width="7" height="8" viewBox="0 0 7 8"><path d="M0.5 0.5 H4.5 L6.5 2.5 V7.5 H0.5 Z" fill="none" stroke="#c4c4c4" stroke-width="1"/><rect x="1.5" y="4" width="4" height="2.6" fill="#c4c4c4"/></svg>
<div class="a" style="left:1037.2px;top:661.5px;font-size:8.6px;line-height:11px;color:#bdbdbd;font-weight:normal;">PDF</div>
<svg class="a" style="left:1058px;top:663px" width="7" height="8" viewBox="0 0 7 8"><rect x="1.5" y="0.3" width="4" height="2.5" fill="#c4c4c4"/><rect x="0" y="3" width="7" height="3.3" rx="0.6" fill="#c4c4c4"/><rect x="1.5" y="5.5" width="4" height="2.3" fill="#c4c4c4"/></svg>
<div class="a" style="left:1068.5px;top:661.5px;font-size:8.6px;line-height:11px;color:#bdbdbd;font-weight:normal;">Print</div>
<div class="a" style="left:1138.3px;top:52.5px;width:6px;height:258px;background:#3b4151;border-radius:3px"></div>
<svg class="a" style="left:944px;top:341px" width="9" height="28" viewBox="0 0 9 28"><path d="M0 0 C0 4 7 6 7 12 V16 C7 22 0 24 0 28 Z" fill="#fff"/><path d="M1.6 10.8 L3.4 13 L1.6 15.2 M3.8 10.8 L5.6 13 L3.8 15.2" fill="none" stroke="#b5b5b5" stroke-width="0.7"/></svg>
<div class="a" style="left:1149px;top:37px;width:38px;height:638px;background:#fff;"></div>
<div class="a" style="left:1149px;top:93px;width:38px;height:1px;background:#f0f0f0;"></div>
<div class="a" style="left:1149px;top:149.5px;width:38px;height:1px;background:#f0f0f0;"></div>
<div class="a" style="left:1149px;top:205.5px;width:38px;height:1px;background:#f0f0f0;"></div>
<div class="a" style="left:1149px;top:261.5px;width:38px;height:1px;background:#f0f0f0;"></div>
<div class="a" style="left:1149px;top:318px;width:38px;height:1px;background:#f0f0f0;"></div>
<svg class="a" style="left:1161px;top:56px" width="14" height="18" viewBox="0 0 14 18"><path d="M1 11.5 V17.3 H11.6 V11.5" fill="none" stroke="#cfcfcf" stroke-width="1.1"/><rect x="2.6" y="13" width="7.4" height="1.1" fill="#c9d6dc"/><rect x="2.6" y="15" width="7.4" height="1" fill="#c9d6dc"/><path d="M3.2 10.2 L9.6 9.6 M3.6 8.4 L9.8 6.3 M4.8 6.9 L10.5 3.4 M6.8 5.9 L12.4 1.2" stroke="#cdcdcd" stroke-width="1.25"/></svg>
<div class="a" style="left:1160.5px;top:76.3px;width:16.7px;height:8.5px;background:#b40f0f;"></div>
<div class="a" style="left:1166.4866015624998px;top:75.05px;font-size:8.5px;line-height:11px;color:#fff;font-weight:bold;">7</div>
<svg class="a" style="left:1159.7px;top:113.2px" width="16.5" height="16.5" viewBox="0 0 16.5 16.5"><ellipse cx="8.25" cy="4.6" rx="3.7" ry="4.3" fill="#d2d2d2"/><path d="M0.3 16.5 V14.2 C0.3 11.6 3 10.2 5.5 9.6 L8.25 11 L11 9.6 C13.5 10.2 16.2 11.6 16.2 14.2 V16.5 Z" fill="#d2d2d2"/></svg>
<svg class="a" style="left:1162.5px;top:169px" width="11" height="17" viewBox="0 0 11 17"><path d="M5.5 0.7 C2.6 0.7 0.7 2.8 0.7 5.2 C0.7 8 3.5 11 4.3 14.3 H6.7 C7.5 11 10.3 8 10.3 5.2 C10.3 2.8 8.4 0.7 5.5 0.7 Z" fill="none" stroke="#c8c8c8" stroke-width="1.1"/><rect x="4.3" y="15" width="2.4" height="1.4" fill="#c8c8c8"/></svg>
<svg class="a" style="left:1160.5px;top:226px" width="15" height="17" viewBox="0 0 15 17"><rect x="1" y="2" width="13" height="14.3" fill="none" stroke="#c8c8c8" stroke-width="1.3"/><rect x="4.5" y="0.3" width="6" height="3" rx="0.8" fill="#c8c8c8"/><path d="M4 9.5 L6.5 12 L11 6.5" fill="none" stroke="#c8c8c8" stroke-width="1.2"/></svg>
<svg class="a" style="left:1159.5px;top:282.5px" width="18" height="16" viewBox="0 0 18 16"><path d="M7.5 1 C3.8 1 1 3.3 1 6.2 C1 8 2 9.5 3.5 10.4 L2.5 13 L6 11.2" fill="none" stroke="#c8c8c8" stroke-width="1.2"/><ellipse cx="11.5" cy="9.3" rx="5.5" ry="4.3" fill="#c8c8c8"/><path d="M14 12.5 L16 15 L11.5 13.4 Z" fill="#c8c8c8"/></svg>
<svg class="a" style="left:1159px;top:337px" width="18" height="19" viewBox="0 0 18 19"><path d="M2.63 5.85 A7.7 7.7 0 1 1 6.67 16.94" fill="none" stroke="#b01c33" stroke-width="1.5"/><circle cx="4.1" cy="15.4" r="0.75" fill="#b01c33"/><circle cx="2.2" cy="12.7" r="0.75" fill="#b01c33"/><circle cx="1.7" cy="9.7" r="0.75" fill="#b01c33"/><path d="M0.6 4.6 L5.2 4.3 L2.6 8 Z" fill="#b01c33"/><path d="M9 5 V10.2 H12.9" fill="none" stroke="#b01c33" stroke-width="1.8"/></svg>
<div class="a" style="left:1160.7px;top:357.3px;width:16px;height:8.5px;background:#b40f0f;"></div>
<div class="a" style="left:1166.3366015625px;top:356.05px;font-size:8.5px;line-height:11px;color:#fff;font-weight:bold;">5</div>
<div class="a" style="left:1137px;top:625px;width:37.5px;height:37.5px;background:#1170b9;border-radius:50%;box-shadow:0 1px 6px rgba(0,0,0,0.18)"></div>
<svg class="a" style="left:1146.5px;top:634px" width="18" height="20" viewBox="0 0 18 20"><path d="M2 0.5 H16 C16.9 0.5 17.5 1.1 17.5 2 V19.5 L13.5 16.5 H2 C1.1 16.5 0.5 15.9 0.5 15 V2 C0.5 1.1 1.1 0.5 2 0.5 Z" fill="#fff"/><path d="M3.2 11 C6.5 13.5 11.5 13.5 14.8 11" fill="none" stroke="#1170b9" stroke-width="1.3"/></svg></body></html>
